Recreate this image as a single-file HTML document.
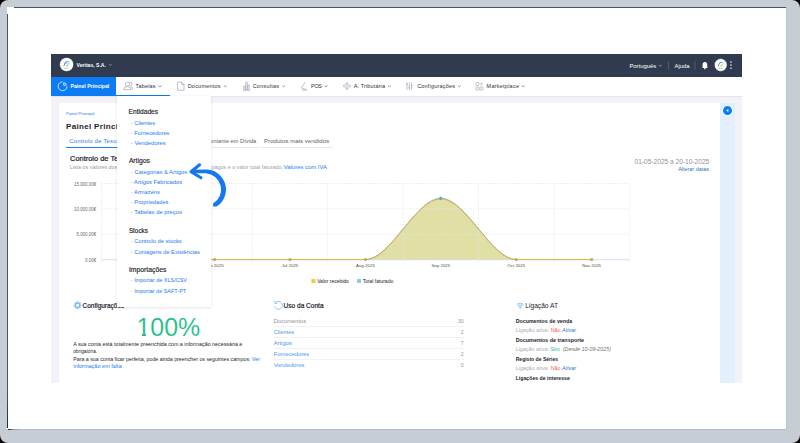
<!DOCTYPE html>
<html><head><meta charset="utf-8">
<style>
*{box-sizing:border-box;margin:0;padding:0}
html,body{width:800px;height:443px;overflow:hidden;background:#000}
body{position:relative;font-family:"Liberation Sans",sans-serif}
.a{position:absolute}
.t{position:absolute;white-space:nowrap;line-height:normal}
svg{position:absolute;left:0;top:0;overflow:visible}
</style></head><body>
<div class="a" style="left:0;top:0;width:800px;height:443px;background:#c7cdd5;border-radius:8px"></div>
<div class="a" style="left:7px;top:7px;width:779px;height:422px;background:#fff"></div>
<div class="a" style="left:14px;top:7px;width:772px;height:1px;background:#45536c"></div>
<div class="a" style="left:7px;top:14px;width:1px;height:414px;background:linear-gradient(180deg,#45536c 0,#45536c 380px,#1e2a40 100%)"></div>
<div class="a" style="left:8px;top:429px;width:778px;height:1px;background:linear-gradient(90deg,#1e2a40 1px,#8a94a3 5px,#b4bbc5 14px,#b4bbc5 100%)"></div>
<div class="a" style="left:786px;top:7px;width:1px;height:423px;background:#c0c6cf"></div>

<!-- app -->
<div class="a" style="left:51px;top:54px;width:691px;height:23px;background:#303b50"></div>
<div class="a" style="left:51px;top:77px;width:691px;height:19px;background:#fff"></div>
<div class="a" style="left:51px;top:96px;width:691px;height:287px;background:#f2f3f8"></div>
<div class="a" style="left:51px;top:95.6px;width:691px;height:0.8px;background:#e2e5ec"></div>
<div class="a" style="left:51px;top:77px;width:65px;height:19px;background:#0b7cf6"></div>
<div class="a" style="left:116px;top:95px;width:54px;height:1px;background:#0b7cf6"></div>
<div class="a" style="left:59px;top:103px;width:661px;height:280px;background:#fff"></div>
<div class="a" style="left:720px;top:103px;width:15px;height:280px;background:#e3effc"></div>

<div class="a" style="left:274px;top:325.8px;width:189.6px;height:0.8px;background:#eff1f4"></div>
<div class="a" style="left:274px;top:336.8px;width:189.6px;height:0.8px;background:#eff1f4"></div>
<div class="a" style="left:274px;top:348px;width:189.6px;height:0.8px;background:#eff1f4"></div>
<div class="a" style="left:274px;top:359.4px;width:189.6px;height:0.8px;background:#eff1f4"></div>
<!-- tabs underline -->
<div class="a" style="left:66px;top:147.2px;width:140px;height:1px;background:#1c7cf0"></div>
<div class="a" style="left:196px;top:147.4px;width:63px;height:0.7px;background:#e6e8ec"></div>
<div class="a" style="left:261px;top:147.4px;width:72px;height:0.7px;background:#e6e8ec"></div>

<svg width="800" height="443" viewBox="0 0 800 443">
 <!-- topbar icons -->
 <circle cx="66.6" cy="64.5" r="7.1" fill="#fff" stroke="#1c2230" stroke-width="0.6"/>
 <path d="M63.8 66 L65.4 62.2 L68.6 61.6" fill="none" stroke="#3a72d0" stroke-width="0.9"/>
 <path d="M64.4 63.6 L67.2 63.2" fill="none" stroke="#6a98e0" stroke-width="0.6"/>
 <path d="M66 65.6 L67.2 66.2 L69.4 62.6" fill="none" stroke="#6cc85a" stroke-width="0.8"/>
 <rect x="64" y="67.8" width="4.6" height="0.5" fill="#9aa0a8"/>
 <path d="M108.9 64.3 L110.3 65.5 L111.7 64.3" fill="none" stroke="#b8bfca" stroke-width="0.65"/>
 <path d="M658.9 65 L660.3 66.2 L661.7 65" fill="none" stroke="#b8bfca" stroke-width="0.65"/>
 <rect x="668.2" y="61.2" width="0.8" height="8.4" fill="#58627a"/>
 <rect x="694.6" y="61" width="0.8" height="8.9" fill="#58627a"/>
 <path d="M702 68 L702.6 67.2 L702.6 64.6 Q702.6 62 704.9 62 Q707.2 62 707.2 64.6 L707.2 67.2 L707.8 68 Z" fill="#fff"/>
 <circle cx="704.9" cy="68.6" r="0.8" fill="#fff"/>
 <circle cx="720.7" cy="65" r="6.4" fill="#fff" stroke="#1c2230" stroke-width="0.5"/>
 <path d="M718.2 66.2 L719.6 62.8 L722.4 62.3" fill="none" stroke="#3a72d0" stroke-width="0.8"/>
 <path d="M720 65.8 L721.1 66.4 L723.2 63.2" fill="none" stroke="#6cc85a" stroke-width="0.7"/>
 <rect x="718.4" y="68" width="4.2" height="0.5" fill="#9aa0a8"/>
 <rect x="730.3" y="61.3" width="1.3" height="1.3" fill="#fff"/>
 <rect x="730.3" y="64.4" width="1.3" height="1.3" fill="#fff"/>
 <rect x="730.3" y="67.6" width="1.3" height="1.3" fill="#fff"/>
 <!-- painel principal pie -->
 <path d="M62.6 81.8 A4.45 4.45 0 1 0 67.05 86.25" fill="none" stroke="#fff" stroke-width="0.75"/>
 <path d="M63.7 82.7 L63.7 85.2 L66.2 85.2 A2.5 2.5 0 0 0 63.7 82.7 Z" fill="none" stroke="#fff" stroke-width="0.75" stroke-linejoin="round"/>
 <!-- nav icons -->
 <g fill="none" stroke="#95a0b4" stroke-width="0.65">
  <circle cx="127.4" cy="84.2" r="2.2"/>
  <path d="M123.6 89.6 Q123.8 86.6 127.4 86.6 Q131 86.6 131.2 89.6 Z"/>
  <path d="M129.6 82.2 Q132 82 132 84.2 Q132 86 130.2 86.4 M131 86.8 Q132.6 87.2 132.6 89.6"/>
  <path d="M177.4 82.2 L181.6 82.2 L184 84.6 L184 90.2 L177.4 90.2 Z M181.6 82.2 L181.6 84.6 L184 84.6"/>
  <path d="M243 90.2 L249.8 90.2 M243.8 90.2 L243.8 86 L245.2 86 L245.2 90.2 M245.8 90.2 L245.8 82.2 L247.2 82.2 L247.2 90.2 M247.8 90.2 L247.8 85 L249.2 85 L249.2 90.2"/>
  <path d="M305.4 82.1 L301.4 87.7 L306.9 90 M301.6 90.1 L307 90.1"/>
  <path d="M347 82.1 L347 83.4 M347 88.6 L347 90.4 M345.6 83.6 L348.4 83.6 M345.6 88.4 L348.4 88.4 M343.4 86 Q343.4 85 344.6 85 L349.4 85 Q350.6 85 350.6 86 Q350.6 87 349.4 87 L344.6 87 Q343.4 87 343.4 86"/>
  <path d="M407 82.4 L407 89.9 M409.3 82.4 L409.3 89.9 M411.6 82.4 L411.6 89.9 M406 84 L408 84 M408.3 87.8 L410.3 87.8 M410.6 85.4 L412.6 85.4"/>
  <rect x="476" y="82.4" width="2.8" height="3.2" rx="0.8"/>
  <path d="M480.4 83.2 L482.6 83.2 M480.4 84.8 L482.6 84.8"/>
  <rect x="476" y="87" width="2.8" height="3" rx="0.5"/>
  <rect x="480" y="87" width="2.8" height="3" rx="0.5"/>
 </g>
 <g fill="none" stroke="#5d6577" stroke-width="0.7">
  <path d="M158.3 85.6 L159.9 87 L161.5 85.6"/>
  <path d="M224 85.6 L225.3 86.8 L226.6 85.6"/>
  <path d="M282.4 85.6 L283.7 86.8 L285 85.6"/>
  <path d="M324.6 85.6 L326.1 86.8 L327.6 85.6"/>
  <path d="M388 85.6 L389.4 86.8 L390.8 85.6"/>
  <path d="M458 85.6 L459.3 86.8 L460.6 85.6"/>
  <path d="M521.8 85.6 L523.2 86.8 L524.6 85.6"/>
 </g>
 <!-- strip circle -->
 <circle cx="727.5" cy="110.6" r="5.2" fill="#fff"/>
 <circle cx="727.5" cy="110.6" r="4.5" fill="#0b7cf6"/>
 <path d="M726.2 110.6 L728.4 109.1 L728.4 112.1 Z" fill="#fff"/>

 <!-- chart grid -->
 <path d="M101.5 259.6 L629.4 259.6" stroke="#dce8f5" stroke-width="1.3"/>
 <g stroke="#dce8f5" stroke-width="0.7"><path d="M101.5 259.6 L101.5 262.2 M176.9 259.6 L176.9 262.2 M252.3 259.6 L252.3 262.2 M327.7 259.6 L327.7 262.2 M403.1 259.6 L403.1 262.2 M478.5 259.6 L478.5 262.2 M554.0 259.6 L554.0 262.2 M629.4 259.6 L629.4 262.2"/></g>
 <path d="M365.4 259.6 C390.6 259.6 415.7 198.4 440.8 198.4 C466.0 198.4 491.1 259.6 516.3 259.6 Z" fill="rgba(191,191,77,0.5)"/>
 <g stroke="#e6e6e6" stroke-width="1" stroke-dasharray="1 1.4" fill="none">
  <path d="M101.5 183.5 L629.4 183.5 M101.5 208.8 L629.4 208.8 M101.5 234.2 L629.4 234.2"/>
  <path d="M101.5 183.5 L101.5 259 M176.9 183.5 L176.9 259 M252.3 183.5 L252.3 259 M327.7 183.5 L327.7 259 M403.1 183.5 L403.1 259 M478.5 183.5 L478.5 259 M554.0 183.5 L554.0 259 M629.4 183.5 L629.4 259"/>
 </g>
 <path d="M365.4 259.6 C390.6 259.6 415.7 198.1 440.8 198.1 C466.0 198.1 491.1 259.6 516.3 259.6" fill="none" stroke="#6aaedc" stroke-width="0.7"/>
 <path d="M139.2 259.6 L365.4 259.6 C390.6 259.6 415.7 198.8 440.8 198.8 C466.0 198.8 491.1 259.6 516.3 259.6 L591.7 259.6" fill="none" stroke="#d9aa2a" stroke-width="0.85"/>
 <g fill="#e0a010" stroke="#8ab4d8" stroke-width="0.3">
  <circle cx="139.2" cy="259.6" r="1.45"/><circle cx="214.6" cy="259.6" r="1.45"/><circle cx="290.0" cy="259.6" r="1.45"/><circle cx="365.4" cy="259.6" r="1.45"/><circle cx="440.8" cy="198.6" r="1.45"/><circle cx="516.3" cy="259.6" r="1.45"/><circle cx="591.7" cy="259.6" r="1.45"/>
 </g>
 <circle cx="440.8" cy="198.2" r="1.4" fill="#5aa6e0"/>
 <rect x="311.4" y="279" width="4" height="4" fill="#f5c842"/>
 <rect x="357" y="279" width="4" height="4" fill="#87ccf2"/>

 <!-- section icons -->
 <g fill="none" stroke="#80bcf5" stroke-width="0.8">
  <circle cx="77.6" cy="305.3" r="2.3" stroke-width="1.6"/>
  <path d="M80.60 305.30 L81.60 305.30 M79.72 307.42 L80.43 308.13 M77.60 308.30 L77.60 309.30 M75.48 307.42 L74.77 308.13 M74.60 305.30 L73.60 305.30 M75.48 303.18 L74.77 302.47 M77.60 302.30 L77.60 301.30 M79.72 303.18 L80.43 302.47" stroke-width="1.3"/>
  <path d="M275.8 302.6 A3.9 3.9 0 1 1 274.7 306.4" stroke-width="0.9"/>
  <path d="M274.6 301.2 L274.9 303.4 L277.2 303.4" stroke-width="0.9"/>
  <path d="M516.8 304.4 Q520.2 302 523.6 304.4 M517.9 305.7 Q520.2 304.2 522.5 305.7 M519 306.9 Q520.2 306.2 521.4 306.9" stroke-width="0.9"/>
  <path d="M520.2 307.2 L520.2 308.8" stroke-width="1.1"/>
 </g>
</svg>

<div id="t0" class="t" style="font-size:5.073px;top:62.00px;color:#fff;font-weight:bold;left:76.60px">Veritas, S.A.</div>
<div id="t1" class="t" style="font-size:5.888px;top:63.00px;color:#fff;left:629.45px">Português</div>
<div id="t2" class="t" style="font-size:5.873px;top:63.00px;color:#fff;left:674.55px">Ajuda</div>
<div id="t3" class="t" style="font-size:5.216px;top:83.00px;color:#fff;font-weight:bold;left:70.49px">Painel Principal</div>
<div id="t4" class="t" style="font-size:5.500px;top:83.00px;color:#2d3240;letter-spacing:0.183px;left:135.47px">Tabelas</div>
<div id="t5" class="t" style="font-size:5.500px;top:83.00px;color:#2d3240;letter-spacing:0.226px;left:187.67px">Documentos</div>
<div id="t6" class="t" style="font-size:5.500px;top:83.00px;color:#2d3240;letter-spacing:0.232px;left:252.67px">Consultas</div>
<div id="t7" class="t" style="font-size:5.500px;top:83.00px;color:#2d3240;letter-spacing:-0.324px;left:311.07px">POS</div>
<div id="t8" class="t" style="font-size:5.500px;top:83.00px;color:#2d3240;letter-spacing:0.145px;left:353.67px">A. Tributária</div>
<div id="t9" class="t" style="font-size:5.500px;top:83.00px;color:#2d3240;letter-spacing:0.198px;left:417.17px">Configurações</div>
<div id="t10" class="t" style="font-size:5.500px;top:83.00px;color:#2d3240;letter-spacing:0.244px;left:486.57px">Marketplace</div>
<div id="t11" class="t" style="font-size:4.150px;top:111.00px;color:#1c7cf0;left:65.95px">Painel Principal</div>
<div id="t12" class="t" style="font-size:8.000px;top:122.00px;color:#1d2330;font-weight:bold;letter-spacing:0.32px;left:66.02px">Painel Principal</div>
<div id="t13" class="t" style="font-size:5.800px;top:138.00px;color:#1c7cf0;letter-spacing:0.22px;left:69.35px">Controlo de Tesouraria</div>
<div id="t14" class="t" style="font-size:5.700px;top:138.00px;color:#5a5f6a;right:543.77px;text-align:right">Montante em Dívida</div>
<div id="t15" class="t" style="font-size:6.121px;top:137.00px;color:#5a5f6a;left:264.03px">Produtos mais vendidos</div>
<div id="t16" class="t" style="font-size:7.450px;top:154.00px;color:#1d2330;-webkit-text-stroke:0.22px #1d2330;left:70.05px">Controlo de Tesouraria</div>
<div id="t17" class="t" style="font-size:5.400px;top:164.00px;color:#9a9ea8;left:69.68px">Lista os valores dos recebimentos e documentos</div>
<div id="t18" class="t" style="font-size:5.413px;top:164.00px;color:#9a9ea8;left:211.48px">pagos e o valor total faturado.</div>
<div id="t19" class="t" style="font-size:5.907px;top:164.00px;color:#1c7cf0;left:283.85px">Valores com IVA</div>
<div id="t20" class="t" style="font-size:6.590px;top:158.00px;color:#8f9298;transform:scaleY(1.08);transform-origin:0 80%;left:634.60px">01-05-2025 a 20-10-2025</div>
<div id="t21" class="t" style="font-size:5.450px;top:166.00px;color:#1f73c6;left:678.17px">Alterar datas</div>
<div id="t22" class="t" style="font-size:4.450px;top:182.00px;color:#666a70;right:703.82px;text-align:right">15.000,00€</div>
<div id="t23" class="t" style="font-size:4.450px;top:207.00px;color:#666a70;right:703.82px;text-align:right">10.000,00€</div>
<div id="t24" class="t" style="font-size:4.450px;top:232.00px;color:#666a70;right:703.82px;text-align:right">5.000,00€</div>
<div id="t25" class="t" style="font-size:4.450px;top:258.00px;color:#666a70;right:703.82px;text-align:right">0,00€</div>
<div id="t26" class="t" style="font-size:4.400px;top:263.00px;color:#4a4a4a;left:129.20px;width:20.00px;text-align:center">May 2025</div>
<div id="t27" class="t" style="font-size:4.400px;top:263.00px;color:#4a4a4a;left:204.62px;width:20.00px;text-align:center">Jun 2025</div>
<div id="t28" class="t" style="font-size:4.400px;top:263.00px;color:#4a4a4a;left:280.02px;width:20.00px;text-align:center">Jul 2025</div>
<div id="t29" class="t" style="font-size:4.400px;top:263.00px;color:#4a4a4a;left:355.44px;width:20.00px;text-align:center">Aug 2025</div>
<div id="t30" class="t" style="font-size:4.400px;top:263.00px;color:#4a4a4a;left:430.84px;width:20.00px;text-align:center">Sep 2025</div>
<div id="t31" class="t" style="font-size:4.400px;top:263.00px;color:#4a4a4a;left:506.25px;width:20.00px;text-align:center">Oct 2025</div>
<div id="t32" class="t" style="font-size:4.400px;top:263.00px;color:#4a4a4a;left:581.66px;width:20.00px;text-align:center">Nov 2025</div>
<div id="t33" class="t" style="font-size:4.962px;top:279.00px;color:#222;left:317.20px">Valor recebido</div>
<div id="t34" class="t" style="font-size:5.050px;top:278.00px;color:#222;left:362.70px">Total faturado</div>
<div id="t35" class="t" style="font-size:6.460px;top:302.00px;color:#1d2330;-webkit-text-stroke:0.2px #1d2330;left:82.61px">Configurações</div>
<div id="t36" class="t" style="font-size:24.916px;top:313.00px;color:#1bbd85;-webkit-text-stroke:0.15px #fff;left:136.51px">100%</div>
<div id="t37" class="t" style="font-size:5.337px;top:341.00px;color:#23262d;left:73.18px">A sua conta está totalmente preenchida com a informação necessária e</div>
<div id="t38" class="t" style="font-size:4.800px;top:349.00px;color:#23262d;left:73.21px">obrigatória.</div>
<div id="t39" class="t" style="font-size:5.293px;top:356.00px;color:#23262d;left:73.18px">Para a sua conta ficar perfeita, pode ainda preencher os seguintes campos: <span style="color:#1c7cf0">Ver</span></div>
<div id="t40" class="t" style="font-size:5.548px;top:363.00px;color:#1c7cf0;left:73.17px">informação em falta</div>
<div id="t41" class="t" style="font-size:6.544px;top:302.00px;color:#1d2330;-webkit-text-stroke:0.2px #1d2330;left:283.61px">Uso da Conta</div>
<div id="t42" class="t" style="font-size:5.813px;top:318.00px;color:#8e9199;left:273.65px">Documentos</div>
<div id="t43" class="t" style="font-size:5.708px;top:329.00px;color:#4d98ee;left:273.66px">Clientes</div>
<div id="t44" class="t" style="font-size:5.853px;top:340.00px;color:#4d98ee;left:273.65px">Artigos</div>
<div id="t45" class="t" style="font-size:5.763px;top:351.00px;color:#4d98ee;left:273.65px">Fornecedores</div>
<div id="t46" class="t" style="font-size:5.741px;top:362.00px;color:#4d98ee;left:273.66px">Vendedores</div>
<div id="t47" class="t" style="font-size:5.000px;top:318.00px;color:#8e9199;right:336.50px;text-align:right">30</div>
<div id="t48" class="t" style="font-size:5.000px;top:329.00px;color:#8e9199;right:336.50px;text-align:right">2</div>
<div id="t49" class="t" style="font-size:5.000px;top:340.00px;color:#8e9199;right:336.50px;text-align:right">7</div>
<div id="t50" class="t" style="font-size:5.000px;top:351.00px;color:#8e9199;right:336.50px;text-align:right">2</div>
<div id="t51" class="t" style="font-size:5.000px;top:362.00px;color:#8e9199;right:336.50px;text-align:right">0</div>
<div id="t52" class="t" style="font-size:6.610px;top:302.00px;color:#1d2330;left:525.35px">Ligação AT</div>
<div id="t53" class="t" style="font-size:5.314px;top:318.00px;color:#1d2330;font-weight:bold;left:515.68px">Documentos de venda</div>
<div id="t54" class="t" style="font-size:5.431px;top:327.00px;color:#a9adb5;left:515.67px">Ligação ativa: <span style="color:#f35c5c">Não</span> <i style="color:#2f6fd6">Ativar</i></div>
<div id="t55" class="t" style="font-size:5.398px;top:337.00px;color:#1d2330;font-weight:bold;left:515.68px">Documentos de transporte</div>
<div id="t56" class="t" style="font-size:5.402px;top:346.00px;color:#a9adb5;left:515.68px">Ligação ativa: <span style="color:#21bf82">Sim</span> &nbsp;<i style="color:#777">(Desde 10-09-2025)</i></div>
<div id="t57" class="t" style="font-size:5.068px;top:356.00px;color:#1d2330;font-weight:bold;left:515.70px">Registo de Séries</div>
<div id="t58" class="t" style="font-size:5.431px;top:365.00px;color:#a9adb5;left:515.67px">Ligação ativa: <span style="color:#f35c5c">Não</span> <i style="color:#2f6fd6">Ativar</i></div>
<div id="t59" class="t" style="font-size:5.203px;top:375.00px;color:#1d2330;font-weight:bold;left:515.69px">Ligações de interesse</div>

<div class="a" style="left:137px;top:333.6px;width:5px;height:2.8px;background:#fff"></div>
<div class="a" style="left:146px;top:333.6px;width:4.5px;height:2.8px;background:#fff"></div>
<!-- dropdown -->
<div class="a" style="left:116.6px;top:96px;width:94.4px;height:210.5px;background:#fff;box-shadow:0 1px 3px rgba(30,40,60,.10),0 0 1px rgba(30,40,60,.08)"></div>
<div id="t60" class="t" style="font-size:6.634px;top:108.00px;color:#1f232b;-webkit-text-stroke:0.16px #1f232b;left:128.60px">Entidades</div>
<div id="t61" class="t" style="font-size:5.729px;top:120.00px;color:#2179f2;left:130.86px"><span style="color:#9aa0aa">-</span> Clientes</div>
<div id="t62" class="t" style="font-size:5.690px;top:130.00px;color:#2179f2;left:130.86px"><span style="color:#9aa0aa">-</span> Fornecedores</div>
<div id="t63" class="t" style="font-size:5.888px;top:140.00px;color:#2179f2;left:130.85px"><span style="color:#9aa0aa">-</span> Vendedores</div>
<div id="t64" class="t" style="font-size:6.711px;top:157.00px;color:#1f232b;-webkit-text-stroke:0.16px #1f232b;left:128.90px">Artigos</div>
<div id="t65" class="t" style="font-size:5.798px;top:169.00px;color:#2179f2;left:130.85px"><span style="color:#9aa0aa">-</span> Categorias &amp; Artigos</div>
<div id="t66" class="t" style="font-size:5.788px;top:179.00px;color:#2179f2;left:130.85px"><span style="color:#9aa0aa">-</span> Artigos Fabricados</div>
<div id="t67" class="t" style="font-size:5.746px;top:189.00px;color:#2179f2;left:130.86px"><span style="color:#9aa0aa">-</span> Armazéns</div>
<div id="t68" class="t" style="font-size:5.744px;top:199.00px;color:#2179f2;left:130.86px"><span style="color:#9aa0aa">-</span> Propriedades</div>
<div id="t69" class="t" style="font-size:5.864px;top:209.00px;color:#2179f2;left:130.85px"><span style="color:#9aa0aa">-</span> Tabelas de preços</div>
<div id="t70" class="t" style="font-size:6.323px;top:227.00px;color:#1f232b;-webkit-text-stroke:0.16px #1f232b;left:128.92px">Stocks</div>
<div id="t71" class="t" style="font-size:5.733px;top:238.00px;color:#2179f2;left:130.86px"><span style="color:#9aa0aa">-</span> Controlo de stocks</div>
<div id="t72" class="t" style="font-size:5.674px;top:249.00px;color:#2179f2;left:130.86px"><span style="color:#9aa0aa">-</span> Contagens de Existências</div>
<div id="t73" class="t" style="font-size:6.846px;top:266.00px;color:#1f232b;-webkit-text-stroke:0.16px #1f232b;left:128.89px">Importações</div>
<div id="t74" class="t" style="font-size:5.496px;top:277.00px;color:#2179f2;left:130.87px"><span style="color:#9aa0aa">-</span> Importar de XLS/CSV</div>
<div id="t75" class="t" style="font-size:5.470px;top:288.00px;color:#2179f2;left:130.87px"><span style="color:#9aa0aa">-</span> Importar de SAFT-PT</div>
<svg width="800" height="443" viewBox="0 0 800 443">
 <path d="M192 169.7 L206 169.5 A20 20 0 0 1 216 206.8 L213 203.5 A16.2 16.2 0 0 0 206 173.3 L192 173.3 Z" fill="#1479f0"/>
 <circle cx="214.5" cy="205.1" r="1.75" fill="#1479f0"/>
 <path d="M199.6 164.8 L191 171.7 L201 177.8" fill="none" stroke="#1479f0" stroke-width="3.1" stroke-linecap="round" stroke-linejoin="round"/>
</svg>
</body></html>
